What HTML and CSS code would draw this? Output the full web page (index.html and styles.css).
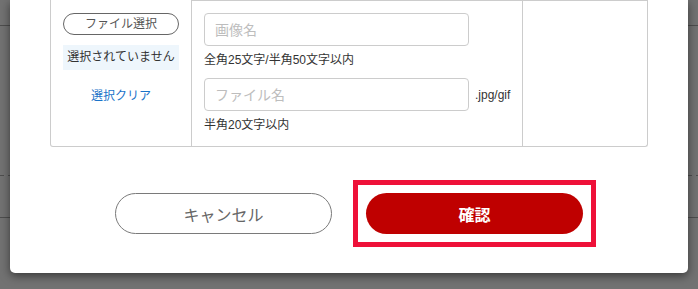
FILE: index.html
```html
<!DOCTYPE html>
<html lang="ja">
<head>
  <meta charset="utf-8">
  <title>画像登録</title>
  <link rel="stylesheet" href="styles.css">
</head>
<body>

  <div class="modal">
    <div class="upload-grid">
      <div class="file-cell">
        <button class="file-button" type="button">ファイル選択</button>
        <p class="file-status">選択されていません</p>
        <a class="file-clear" href="#">選択クリア</a>
      </div>

      <div class="name-cell">
        <input class="text-input" type="text" placeholder="画像名">
        <p class="hint">全角25文字/半角50文字以内</p>

        <div class="file-row">
          <input class="text-input" type="text" placeholder="ファイル名">
          <span class="ext">.jpg/gif</span>
        </div>
        <p class="hint">半角20文字以内</p>
      </div>

      <div class="blank-cell"></div>
    </div>

    <div class="modal-actions">
      <button class="btn btn-cancel" type="button">キャンセル</button>
      <button class="btn btn-confirm" type="button">確認</button>
    </div>
  </div>

</body>
</html>
```

FILE: styles.css
```css
body {
  margin: 0;
  font-family: "Liberation Sans", "Noto Sans CJK JP", sans-serif;
  color: #333;
  height: 289px;
  overflow: hidden;
  /* page behind the overlay */
  background-color: #727272;
  background-image:
    linear-gradient(#4e4e4e, #4e4e4e),
    linear-gradient(to right, #4e4e4e 50%, transparent 50%),
    linear-gradient(#4e4e4e, #4e4e4e);
  background-size: 100% 1px, 8px 1px, 100% 1px;
  background-position: 0 25px, 0 175px, 0 217px;
  background-repeat: no-repeat, repeat-x, no-repeat;
}

.modal {
  width: 678px;
  margin-left: 10px;
  padding: 0 40px 39px;
  box-sizing: border-box;
  background: #fff;
  border-radius: 0 0 5px 5px;
  box-shadow: 0 3px 10px rgba(0, 0, 0, 0.5);
}

/* Upload table */
.upload-grid {
  display: grid;
  grid-template-columns: 140px 331px 125px;
  width: 598px;
  border: 1px solid #ccc;
  border-top: none;
  border-radius: 0 0 3px 3px;
  box-sizing: border-box;
}

.file-cell {
  padding: 13px 12px 0;
  text-align: center;
}

.name-cell {
  padding: 12px 0 12px 12px;
  border-left: 1px solid #ccc;
  border-top: 1px solid #ccc;
}

.blank-cell {
  border-left: 1px solid #ccc;
  border-top: 1px solid #ccc;
}

.file-button {
  display: block;
  width: 100%;
  height: 22px;
  padding: 0;
  border: 1px solid #666;
  border-radius: 11px;
  background: #fff;
  color: #555;
  font-family: inherit;
  font-size: 12px;
  line-height: 20px;
}

.file-status {
  margin: 10px 0 0;
  height: 25px;
  line-height: 25px;
  background: #eef6fc;
  font-size: 12px;
  color: #333;
}

.file-clear {
  display: block;
  margin-top: 17px;
  font-size: 12px;
  line-height: 18px;
  color: #1a73c9;
  text-decoration: none;
}

.text-input {
  display: block;
  width: 265px;
  height: 33px;
  padding: 0 10px;
  box-sizing: border-box;
  border: 1px solid #ccc;
  border-radius: 4px;
  font-family: inherit;
  font-size: 14px;
  color: #333;
}

.text-input::placeholder {
  color: #bdbdbd;
}

.hint {
  margin: 5px 0 0;
  font-size: 12px;
  line-height: 18px;
}

.file-row {
  display: flex;
  align-items: center;
  gap: 6px;
  margin-top: 9px;
}

.ext {
  font-size: 12px;
  color: #333;
}

/* Buttons */
.modal-actions {
  display: flex;
  justify-content: center;
  gap: 34px;
  margin-top: 46px;
}

.btn {
  width: 217px;
  height: 41px;
  border-radius: 21px;
  font-family: inherit;
  font-size: 16px;
  cursor: pointer;
}

.btn-cancel {
  background: #fff;
  border: 1px solid #7a7a7a;
  color: #666;
}

.btn-confirm {
  position: relative;
  background: #bf0000;
  border: none;
  color: #fff;
  font-weight: bold;
}

/* highlight frame drawn over the confirm button */
.btn-confirm::after {
  content: "";
  position: absolute;
  top: -13px;
  right: -13px;
  bottom: -13px;
  left: -13px;
  border: 5px solid #ee1139;
  pointer-events: none;
}
```
